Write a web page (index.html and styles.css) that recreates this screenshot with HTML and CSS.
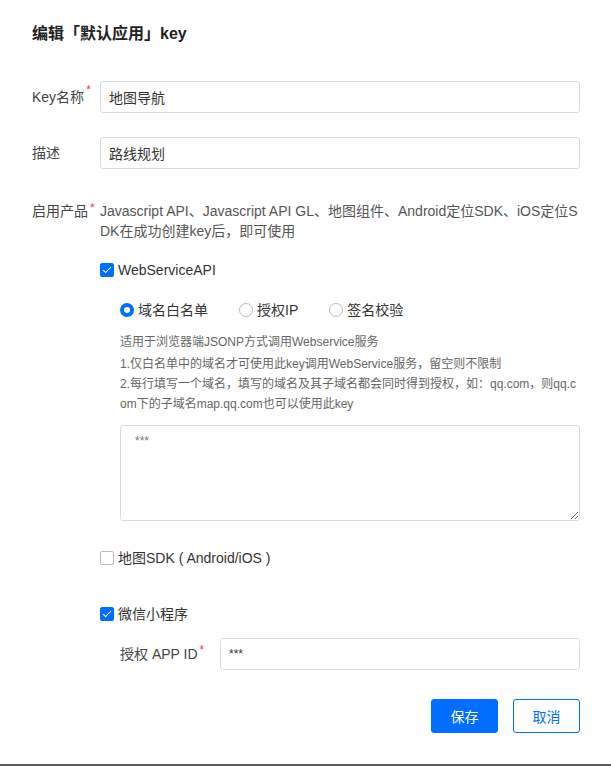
FILE: index.html
```html
<!DOCTYPE html>
<html lang="zh-CN">
<head>
<meta charset="utf-8">
<title>编辑「默认应用」key</title>
<link rel="stylesheet" href="styles.css">
</head>
<body>
<div class="dialog">
  <h1 class="title">编辑「默认应用」key</h1>
  <div class="form">
    <div class="row row-input">
      <label class="label">Key名称<span class="req">*</span></label>
      <div class="field"><input class="input" type="text" value="地图导航"></div>
    </div>
    <div class="row row-input row-2">
      <label class="label">描述</label>
      <div class="field"><input class="input" type="text" value="路线规划"></div>
    </div>
    <div class="row row-products">
      <label class="label label-text">启用产品<span class="req">*</span></label>
      <div class="field">
        <p class="products-desc">Javascript API、Javascript API GL、地图组件、Android定位SDK、iOS定位SDK在成功创建key后，即可使用</p>

        <div class="check-row check-ws">
          <span class="checkbox checked"></span><span class="check-text">WebServiceAPI</span>
        </div>
        <div class="sub">
          <div class="radios">
            <span class="radio-item"><span class="radio checked"></span>域名白名单</span>
            <span class="radio-item"><span class="radio"></span>授权IP</span>
            <span class="radio-item"><span class="radio"></span>签名校验</span>
          </div>
          <div class="hint">
            <p class="hint-first">适用于浏览器端JSONP方式调用Webservice服务</p>
            <p>1.仅白名单中的域名才可使用此key调用WebService服务，留空则不限制</p>
            <p>2.每行填写一个域名，填写的域名及其子域名都会同时得到授权，如：qq.com，则qq.com下的子域名map.qq.com也可以使用此key</p>
          </div>
          <textarea class="textarea">***</textarea>
        </div>

        <div class="check-row check-sdk">
          <span class="checkbox"></span><span class="check-text">地图SDK ( Android/iOS )</span>
        </div>

        <div class="check-row check-mp">
          <span class="checkbox checked"></span><span class="check-text">微信小程序</span>
        </div>
        <div class="sub sub-row">
          <label class="sub-label">授权 APP ID<span class="req">*</span></label>
          <input class="input input-small" type="text" value="***">
        </div>
      </div>
    </div>
  </div>
  <div class="footer">
    <button class="btn btn-primary" type="button">保存</button>
    <button class="btn btn-default" type="button">取消</button>
  </div>
</div>
</body>
</html>
```

FILE: styles.css
```css
html, body {
  margin: 0;
  padding: 0;
  background: #fff;
}
body {
  font-family: "Liberation Sans", "Noto Sans CJK SC", sans-serif;
  color: #333;
  font-size: 14px;
  line-height: 20px;
}
.dialog {
  box-sizing: border-box;
  width: 611px;
  height: 766px;
  padding: 22px 31px 0 32px;
  border-bottom: 2px solid #5a5a5a;
}
.title {
  margin: 0;
  font-size: 16px;
  line-height: 24px;
  font-weight: bold;
  color: #222;
}
.form {
  margin-top: 35px;
}
.row {
  display: grid;
  grid-template-columns: 68px 1fr;
  align-items: start;
}
.row-2 {
  margin-top: 24px;
}
.row-input .label {
  line-height: 32px;
}
.label {
  color: #444;
  white-space: nowrap;
}
.req {
  color: #e54545;
  font-size: 12px;
  vertical-align: top;
  position: relative;
  top: -3px;
  margin-left: 2px;
}
.row-input .req {
  top: -7px;
}
.input {
  box-sizing: border-box;
  width: 100%;
  height: 32px;
  border: 1px solid #dcdcdc;
  border-radius: 3px;
  padding: 0 8px;
  font: inherit;
  color: #333;
  outline: none;
  background: #fff;
}
.row-products {
  margin-top: 32px;
}
.products-desc {
  margin: 0;
  color: #555;
  word-break: break-all;
}
.check-row {
  display: flex;
  align-items: center;
  height: 20px;
}
.check-ws {
  margin-top: 19px;
}
.check-sdk {
  margin-top: 27px;
}
.check-mp {
  margin-top: 36px;
}
.checkbox {
  box-sizing: border-box;
  width: 14px;
  height: 14px;
  border: 1px solid #bbb;
  border-radius: 2px;
  background: #fff;
  margin-right: 4px;
  position: relative;
  flex: none;
}
.checkbox.checked {
  background: #006eff;
  border-color: #006eff;
}
.checkbox.checked::after {
  content: "";
  position: absolute;
  left: 4px;
  top: 1px;
  width: 3px;
  height: 7px;
  border: solid #fff;
  border-width: 0 1.5px 1.5px 0;
  transform: rotate(45deg);
}
.check-text {
  color: #333;
}
.sub {
  padding-left: 20px;
}
.radios {
  display: flex;
  margin-top: 20px;
  height: 20px;
  align-items: center;
}
.radio-item {
  display: flex;
  align-items: center;
  margin-right: 31px;
  color: #333;
}
.radio {
  box-sizing: border-box;
  width: 14px;
  height: 14px;
  border: 1px solid #bbb;
  border-radius: 50%;
  margin-right: 4px;
  background: #fff;
}
.radio.checked {
  border: 4.5px solid #006eff;
}
.hint {
  margin-top: 12px;
  font-size: 12px;
  line-height: 20px;
  color: #666;
}
.hint p {
  margin: 0;
  word-break: break-all;
}
.hint-first {
  margin-bottom: 2px !important;
}
.textarea {
  display: block;
  box-sizing: border-box;
  width: 100%;
  height: 96px;
  margin-top: 11px;
  border: 1px solid #dcdcdc;
  border-radius: 3px;
  padding: 6px 14px;
  font-family: inherit;
  font-size: 12px;
  line-height: 18px;
  color: #777;
  outline: none;
}
.sub-row {
  display: grid;
  grid-template-columns: 100px 1fr;
  align-items: center;
  margin-top: 14px;
}
.sub-label {
  color: #444;
  white-space: nowrap;
}
.sub-label .req {
  top: -4px;
}
.input-small {
  font-size: 12px;
}
.footer {
  display: flex;
  justify-content: flex-end;
  gap: 15px;
  margin-top: 29px;
}
.btn {
  box-sizing: border-box;
  width: 67px;
  height: 34px;
  border-radius: 3px;
  font-family: inherit;
  font-size: 14px;
  cursor: pointer;
}
.btn-primary {
  background: #006eff;
  border: 1px solid #006eff;
  color: #fff;
}
.btn-default {
  background: #fff;
  border: 1px solid #006eff;
  color: #006eff;
}
```
